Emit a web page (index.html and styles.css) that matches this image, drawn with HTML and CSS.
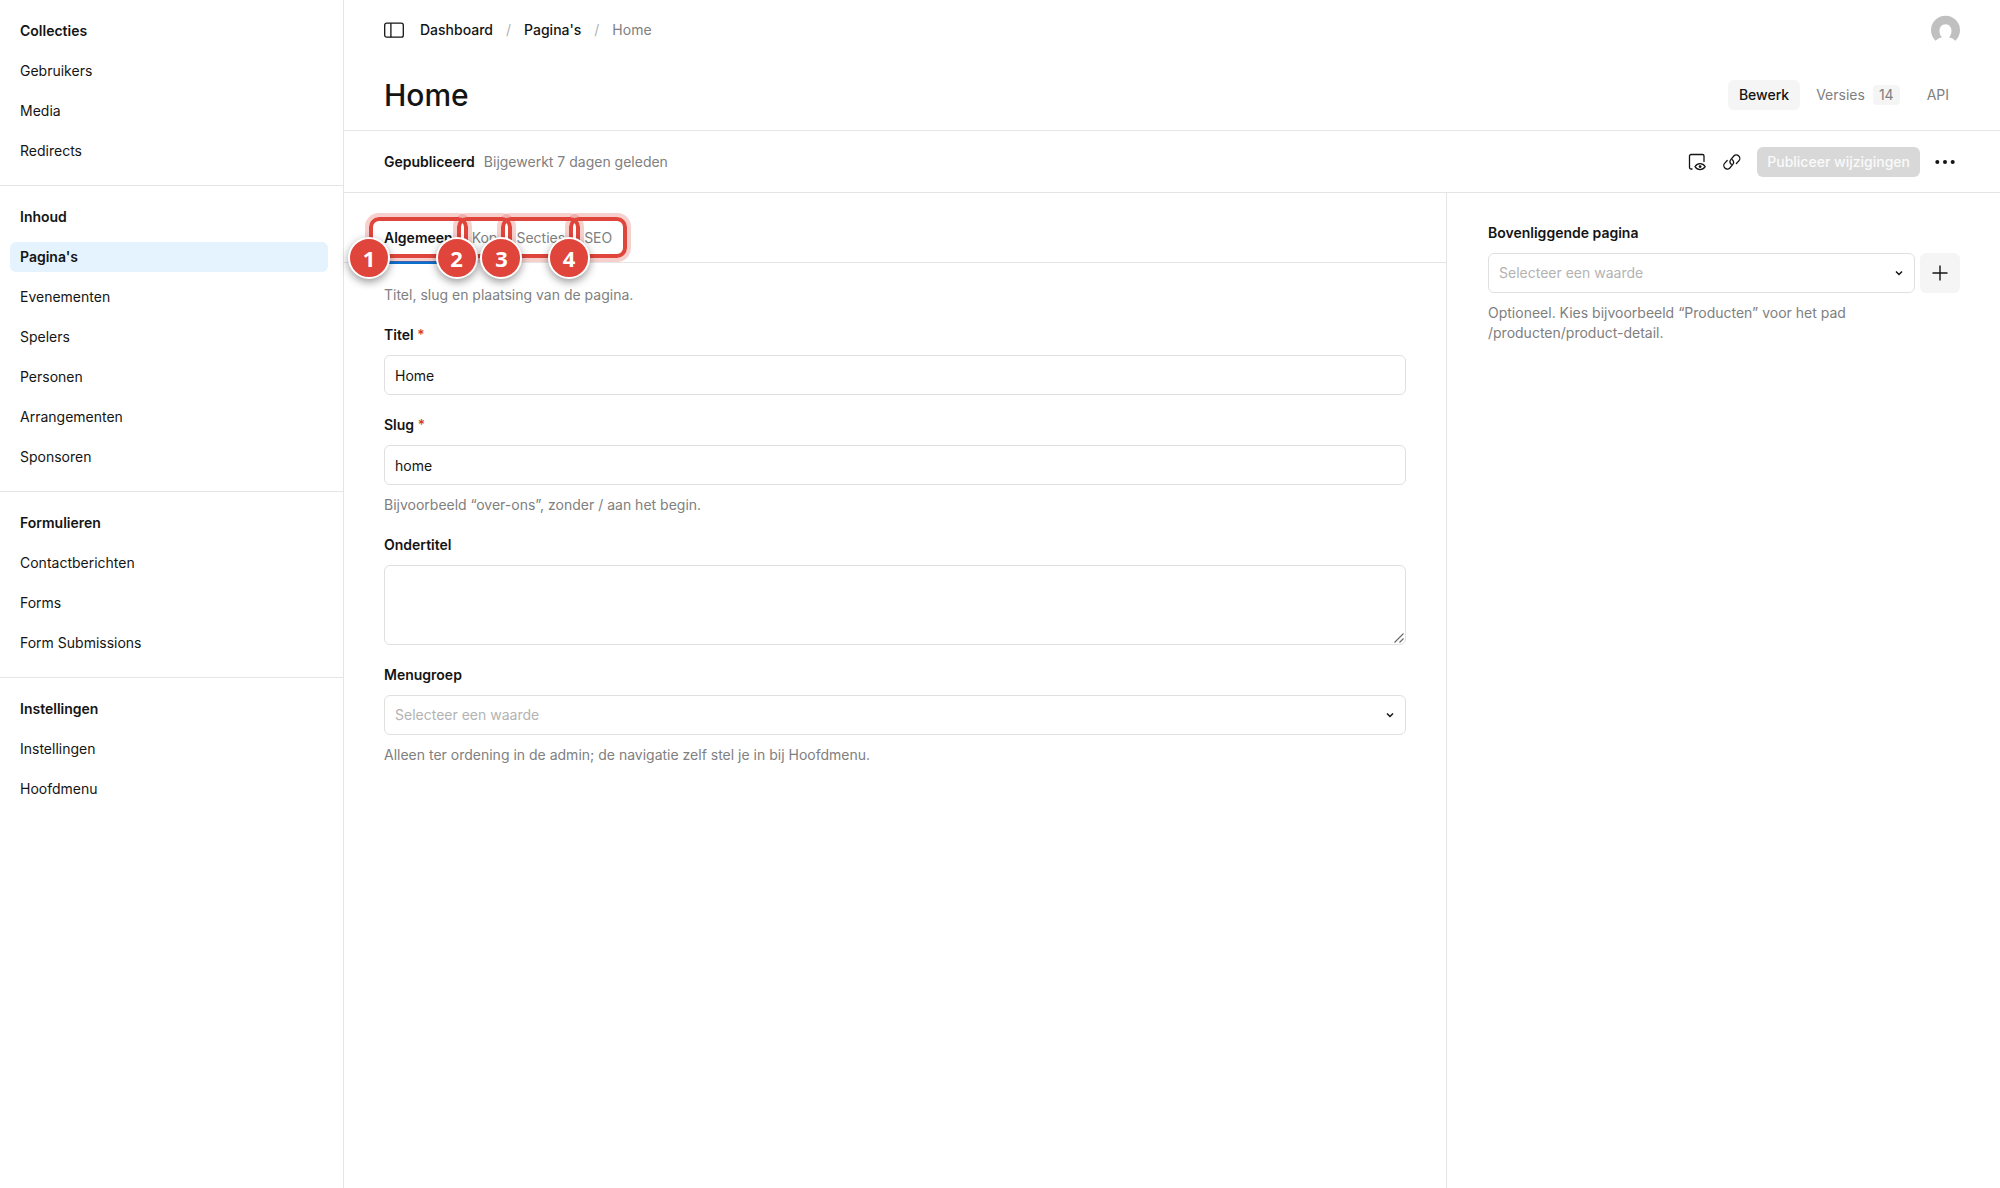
FILE: index.html
```html
<!DOCTYPE html>
<html lang="nl">
<head>
<meta charset="utf-8">
<meta name="viewport" content="width=device-width, initial-scale=1">
<title>Home - Pagina's</title>
<link rel="stylesheet" href="styles.css">
</head>
<body>
<div class="app">
  <nav class="sidebar" aria-label="Navigatie">
    <section class="nav-group">
      <h2 class="nav-title">Collecties</h2>
      <a class="nav-link" href="#">Gebruikers</a>
      <a class="nav-link" href="#">Media</a>
      <a class="nav-link" href="#">Redirects</a>
    </section>
    <section class="nav-group">
      <h2 class="nav-title">Inhoud</h2>
      <a class="nav-link active" href="#" aria-current="page">Pagina's</a>
      <a class="nav-link" href="#">Evenementen</a>
      <a class="nav-link" href="#">Spelers</a>
      <a class="nav-link" href="#">Personen</a>
      <a class="nav-link" href="#">Arrangementen</a>
      <a class="nav-link" href="#">Sponsoren</a>
    </section>
    <section class="nav-group">
      <h2 class="nav-title">Formulieren</h2>
      <a class="nav-link" href="#">Contactberichten</a>
      <a class="nav-link" href="#">Forms</a>
      <a class="nav-link" href="#">Form Submissions</a>
    </section>
    <section class="nav-group">
      <h2 class="nav-title">Instellingen</h2>
      <a class="nav-link" href="#">Instellingen</a>
      <a class="nav-link" href="#">Hoofdmenu</a>
    </section>
  </nav>

  <div class="page">
    <header class="header">
      <div class="topbar">
        <button class="icon-button" type="button" aria-label="Menu">
          <svg width="20" height="20" viewBox="0 0 20 20" fill="none" stroke="currentColor" stroke-width="1.3"><rect x=".7" y="3.2" width="18.600" height="14" rx="2"/><path d="M6.900 3.200v14"/></svg>
        </button>
        <nav class="crumbs" aria-label="Kruimelpad">
          <a href="#">Dashboard</a>
          <span class="slash">/</span>
          <a href="#">Pagina's</a>
          <span class="slash">/</span>
          <span class="here">Home</span>
        </nav>
        <a class="account" href="#" aria-label="Account">
          <svg width="29" height="30" viewBox="0 0 30 30"><path fill="#c0c0c0" d="M4.6 26A15 15 0 1 1 25.4 26A16 16 0 0 0 18.6 22.4C20.4 21 21.2 18.700 21.200 16C21.200 12 18.800 9 15 9S8.800 12 8.800 16C8.800 18.700 9.600 21 11.400 22.400A16 16 0 0 0 4.600 26Z"/></svg>
        </a>
      </div>
      <div class="titlebar">
        <h1 class="title">Home</h1>
        <nav class="views" aria-label="Weergaven">
          <a class="view current" href="#">Bewerk</a>
          <a class="view" href="#">Versies <span class="count">14</span></a>
          <a class="view" href="#">API</a>
        </nav>
      </div>
    </header>

    <div class="controls">
      <p class="status"><strong>Gepubliceerd</strong><span>Bijgewerkt 7 dagen geleden</span></p>
      <div class="actions">
        <button class="icon-button" type="button" aria-label="Live voorbeeld">
          <svg width="20" height="20" viewBox="0 0 20 20" fill="none" stroke="currentColor" stroke-width="1.300" stroke-linecap="round" stroke-linejoin="round"><path d="M5 17H4A1.500 1.500 0 0 1 2.500 15.500V4A1.500 1.500 0 0 1 4 2.500H15.500A1.500 1.500 0 0 1 17 4V9.500"/><path d="M8 14.600C9.400 12.500 11.100 11.600 13.100 11.600S16.800 12.500 18.200 14.600C16.800 16.700 15.100 17.600 13.100 17.600S9.400 16.700 8 14.600Z"/><circle cx="13.100" cy="14.600" r=".8" fill="currentColor"/></svg>
        </button>
        <button class="icon-button" type="button" aria-label="Voorbeeldlink">
          <svg width="20" height="20" viewBox="0 0 20 20" fill="none" stroke="currentColor" stroke-width="1.300" stroke-linecap="round" stroke-linejoin="round"><path d="M9.300 12.300a3.600 3.600 0 0 1-.3-5l2.800-3.300a3.500 3.500 0 0 1 5 4.900l-2.400 2.600"/><path d="M10.300 7.700a3.600 3.600 0 0 1 .3 5l-2.800 3.300a3.500 3.500 0 0 1-5-4.900l2.400-2.600"/></svg>
        </button>
        <button class="publish" type="button" disabled>Publiceer wijzigingen</button>
        <button class="icon-button more" type="button" aria-label="Meer">
          <svg width="20" height="20" viewBox="0 0 20 20" fill="currentColor"><circle cx="2.300" cy="10" r="2"/><circle cx="10" cy="10" r="2"/><circle cx="17.700" cy="10" r="2"/></svg>
        </button>
      </div>
    </div>

    <div class="columns">
      <main class="main">
        <div class="tabs" role="tablist">
          <div class="tab-item">
            <button class="tab selected" type="button" role="tab" aria-selected="true">Algemeen</button>
            <span class="outline"></span><span class="marker">1</span>
          </div>
          <div class="tab-item">
            <button class="tab" type="button" role="tab">Kop</button>
            <span class="outline"></span><span class="marker">2</span>
          </div>
          <div class="tab-item">
            <button class="tab" type="button" role="tab">Secties</button>
            <span class="outline"></span><span class="marker">3</span>
          </div>
          <div class="tab-item">
            <button class="tab" type="button" role="tab">SEO</button>
            <span class="outline"></span><span class="marker">4</span>
          </div>
        </div>
        <form class="fields">
          <p class="hint">Titel, slug en plaatsing van de pagina.</p>
          <div class="field">
            <label for="titel">Titel <span class="required">*</span></label>
            <input class="control" id="titel" type="text" value="Home">
          </div>
          <div class="field">
            <label for="slug">Slug <span class="required">*</span></label>
            <input class="control" id="slug" type="text" value="home">
            <p class="hint">Bijvoorbeeld “over-ons”, zonder / aan het begin.</p>
          </div>
          <div class="field">
            <label for="ondertitel">Ondertitel</label>
            <div class="area-wrap">
              <textarea class="control area" id="ondertitel"></textarea>
              <svg class="grip" width="10" height="10" viewBox="0 0 10 10" fill="none" stroke="#666" stroke-width="1.100"><path d="M.5 9.500l9-9M5.500 9.500l4-4"/></svg>
            </div>
          </div>
          <div class="field">
            <label for="menugroep">Menugroep</label>
            <div class="select">
              <select class="control" id="menugroep"><option>Selecteer een waarde</option></select>
              <svg class="chevron" width="10" height="10" viewBox="0 0 10 10" fill="none" stroke="currentColor" stroke-width="1.500"><path d="M2 3.500l3 3 3-3"/></svg>
            </div>
            <p class="hint">Alleen ter ordening in de admin; de navigatie zelf stel je in bij Hoofdmenu.</p>
          </div>
        </form>
      </main>

      <aside class="aside">
        <div class="field">
          <label for="bovenliggend">Bovenliggende pagina</label>
          <div class="relation">
            <div class="select">
              <select class="control" id="bovenliggend"><option>Selecteer een waarde</option></select>
              <svg class="chevron" width="10" height="10" viewBox="0 0 10 10" fill="none" stroke="currentColor" stroke-width="1.500"><path d="M2 3.500l3 3 3-3"/></svg>
            </div>
            <button class="add" type="button" aria-label="Nieuwe pagina">
              <svg width="16" height="16" viewBox="0 0 16 16" fill="none" stroke="currentColor" stroke-width="1.400"><path d="M8 .5v15M.5 8h15"/></svg>
            </button>
          </div>
          <p class="hint">Optioneel. Kies bijvoorbeeld “Producten” voor het pad /producten/product-detail.</p>
        </div>
      </aside>
    </div>
  </div>
</div>
</body>
</html>
```

FILE: styles.css
```css
:root {
  --text: #141414;
  --muted: #808080;
  --faint: #b3b3b3;
  --line: #e5e5e5;
  --soft: #f5f5f5;
  --mark: #e0453c;
}

* { box-sizing: border-box; }

body {
  margin: 0;
  background: #fff;
  color: var(--text);
  font: 14px/20px Inter, "Liberation Sans", sans-serif;
}

h1, h2, p { margin: 0; }
a { color: inherit; text-decoration: none; }
button, input, select, textarea { font: inherit; color: inherit; }
button { border: 0; padding: 0; background: none; }
svg { display: block; }

.app { display: flex; min-height: 100vh; }

/* Sidebar */
.sidebar { flex: 0 0 344px; border-right: 1px solid var(--line); }
.nav-group {
  display: flex;
  flex-direction: column;
  gap: 10px;
  padding: 16px 15px 19px 10px;
}
.nav-group + .nav-group { border-top: 1px solid var(--line); }
.nav-title, .nav-link {
  padding: 5px 10px;
  border-radius: 6px;
  font-size: 14px;
}
.nav-title { font-weight: 600; }
.active { background: #e5f3fe; font-weight: 600; }

/* Header */
.page { flex: 1; min-width: 0; display: flex; flex-direction: column; }
.header { border-bottom: 1px solid var(--line); }
.topbar {
  display: flex;
  align-items: center;
  gap: 16px;
  height: 60px;
  padding: 0 40px;
}
.crumbs { display: flex; gap: 13px; }
.crumbs a { font-weight: 500; }
.slash { color: var(--faint); }
.here { color: var(--muted); }
.account { margin-left: auto; }
.titlebar {
  display: flex;
  align-items: center;
  justify-content: space-between;
  height: 70px;
  padding: 0 40px;
}
.title { font-size: 30px; line-height: 40px; font-weight: 500; }
.views { display: flex; gap: 5px; }
.view {
  display: flex;
  align-items: center;
  gap: 8px;
  height: 30px;
  padding: 0 11px;
  border-radius: 6px;
  color: var(--muted);
}
.current { background: var(--soft); color: var(--text); font-weight: 500; }
.count { padding: 0 6px; border-radius: 4px; background: var(--soft); }

.controls {
  display: flex;
  align-items: center;
  justify-content: space-between;
  height: 62px;
  padding: 0 40px;
  border-bottom: 1px solid var(--line);
}
.status { display: flex; gap: 9px; color: var(--muted); }
.status strong { color: var(--text); font-weight: 600; }
.actions { display: flex; align-items: center; gap: 15px; }
.publish {
  height: 30px;
  padding: 0 10px;
  border-radius: 6px;
  background: #d8d8d8;
  color: #fafafa;
  font-weight: 500;
}
.more { margin-right: 5px; }

/* Columns */
.columns { flex: 1; display: grid; grid-template-columns: minmax(0, 1fr) 554px; }
.aside { padding: 30px 40px 30px 41px; border-left: 1px solid var(--line); }

.tabs {
  display: flex;
  gap: 19px;
  height: 70px;
  padding: 20px 40px 0;
  border-bottom: 1px solid var(--line);
}
.tab-item { position: relative; height: 51px; }
.tab { height: 51px; padding-top: 2px; color: var(--muted); border-bottom: 3px solid transparent; }
.selected { color: var(--text); font-weight: 600; border-bottom-color: #0a70d0; }

/* Numbered call-outs drawn over the tabs */
.outline {
  position: absolute;
  z-index: 1;
  inset: 4px -15px 6px;
  border: 4px solid var(--mark);
  border-radius: 10px;
  box-shadow: 0 0 0 4px rgba(224, 69, 60, .25);
  pointer-events: none;
}
.marker {
  position: absolute;
  z-index: 2;
  left: -36px;
  bottom: -15px;
  width: 42px;
  height: 42px;
  border: 2px solid #fff;
  border-radius: 50%;
  background: var(--mark);
  box-shadow: 0 3px 8px rgba(0, 0, 0, .4);
  color: #fff;
  font: 700 22px/38px "Noto Sans", sans-serif;
  text-align: center;
}

/* Fields */
.fields { display: flex; flex-direction: column; gap: 20px; padding: 22px 40px; }
.field { display: flex; flex-direction: column; gap: 10px; }
.field label { font-weight: 600; }
.required { color: #d5392c; font-weight: 500; }
.hint { color: var(--muted); }
.control {
  display: block;
  width: 100%;
  height: 40px;
  padding: 0 10px;
  border: 1px solid #e0e0e0;
  border-radius: 6px;
  background: #fff;
}
.area-wrap { position: relative; }
.area { height: 80px; resize: none; }
.grip { position: absolute; right: 2px; bottom: 2px; pointer-events: none; }
.select { position: relative; flex: 1; }
.select .control { appearance: none; color: var(--faint); }
.chevron { position: absolute; top: 15px; right: 11px; pointer-events: none; }
.relation { display: flex; gap: 5px; }
.add {
  display: grid;
  place-items: center;
  width: 40px;
  height: 40px;
  border-radius: 6px;
  background: var(--soft);
}
```
